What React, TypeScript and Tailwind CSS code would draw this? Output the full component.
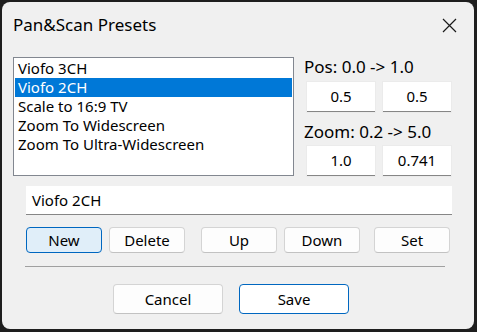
const presets = [
  'Viofo 3CH',
  'Viofo 2CH',
  'Scale to 16:9 TV',
  'Zoom To Widescreen',
  'Zoom To Ultra-Widescreen',
];

const font = { fontFamily: '"Noto Sans", "Segoe UI", sans-serif' };

function ValueBox({ value }: { value: string }) {
  return (
    <div className="w-[68px] h-[30px] bg-white border-b border-[#868686] shadow-[0_0_0_1px_#ebebeb] flex items-center justify-center text-[15px] text-black">
      {value}
    </div>
  );
}

function Btn({ label, className = '' }: { label: string; className?: string }) {
  return (
    <button
      className={
        'h-[26px] w-[76px] rounded-[4px] border border-[#d4d4d4] border-b-[#c2c2c2] bg-[#fdfdfd] text-[15px] text-black flex items-center justify-center ' +
        className
      }
    >
      {label}
    </button>
  );
}

export default function App() {
  const selected = 1;
  return (
    <div className="w-[477px] h-[332px] bg-[#1e1e1e] p-[2px] pr-[3px] pb-[3px]" style={font}>
      <div className="w-[472px] h-[327px] bg-[#f0f0f0] rounded-[8px] flex flex-col">
        {/* Title bar */}
        <div className="h-[44px] flex items-center justify-between pl-[11px] pr-[17px]">
          <span className="text-[17px] text-black pt-[2px]">Pan&amp;Scan Presets</span>
          <svg width="15" height="15" viewBox="0 0 15 15" className="mt-[2px]">
            <path d="M1 1 L14 14 M14 1 L1 14" stroke="#1a1a1a" strokeWidth="1.2" />
          </svg>
        </div>

        {/* List + values */}
        <div className="flex mt-[11px] ml-[11px]">
          <div className="w-[281px] h-[119px] bg-white border border-[#828790] pt-[1px] px-[1px]">
            {presets.map((p, i) => (
              <div
                key={p}
                className={
                  'h-[19px] pl-[3px] text-[15px] leading-[19px] whitespace-nowrap ' +
                  (i === selected ? 'bg-[#0078d7] text-white' : 'text-black')
                }
              >
                {p}
              </div>
            ))}
          </div>
          <div className="ml-[10px] flex flex-col">
            <div className="h-[20px] leading-[20px] text-[17px] text-black">Pos: 0.0 -&gt; 1.0</div>
            <div className="flex gap-[8px] ml-[3px] mt-[5px]">
              <ValueBox value="0.5" />
              <ValueBox value="0.5" />
            </div>
            <div className="h-[20px] leading-[20px] text-[17px] text-black mt-[10px]">Zoom: 0.2 -&gt; 5.0</div>
            <div className="flex gap-[8px] ml-[3px] mt-[4px]">
              <ValueBox value="1.0" />
              <ValueBox value="0.741" />
            </div>
          </div>
        </div>

        {/* Name edit */}
        <div className="ml-[24px] mt-[10px] w-[426px] h-[29px] bg-white border-b border-[#868686] flex items-center pl-[6px] text-[15px] text-black">
          Viofo 2CH
        </div>

        {/* Action buttons */}
        <div className="flex ml-[24px] mt-[12px]">
          <Btn label="New" className="!bg-[#e0eef9] !border-[#0067c0]" />
          <Btn label="Delete" className="ml-[7px]" />
          <Btn label="Up" className="ml-[16px]" />
          <Btn label="Down" className="ml-[7px]" />
          <Btn label="Set" className="ml-[14px]" />
        </div>

        <div className="ml-[23px] mt-[13px] w-[420px] h-px bg-[#a0a0a0]" />

        {/* Dialog buttons */}
        <div className="flex ml-[111px] mt-[17px]">
          <Btn label="Cancel" className="!w-[110px] !h-[30px]" />
          <Btn label="Save" className="!w-[110px] !h-[30px] ml-[16px] !border-[#0067c0] !bg-white" />
        </div>
      </div>
    </div>
  );
}
